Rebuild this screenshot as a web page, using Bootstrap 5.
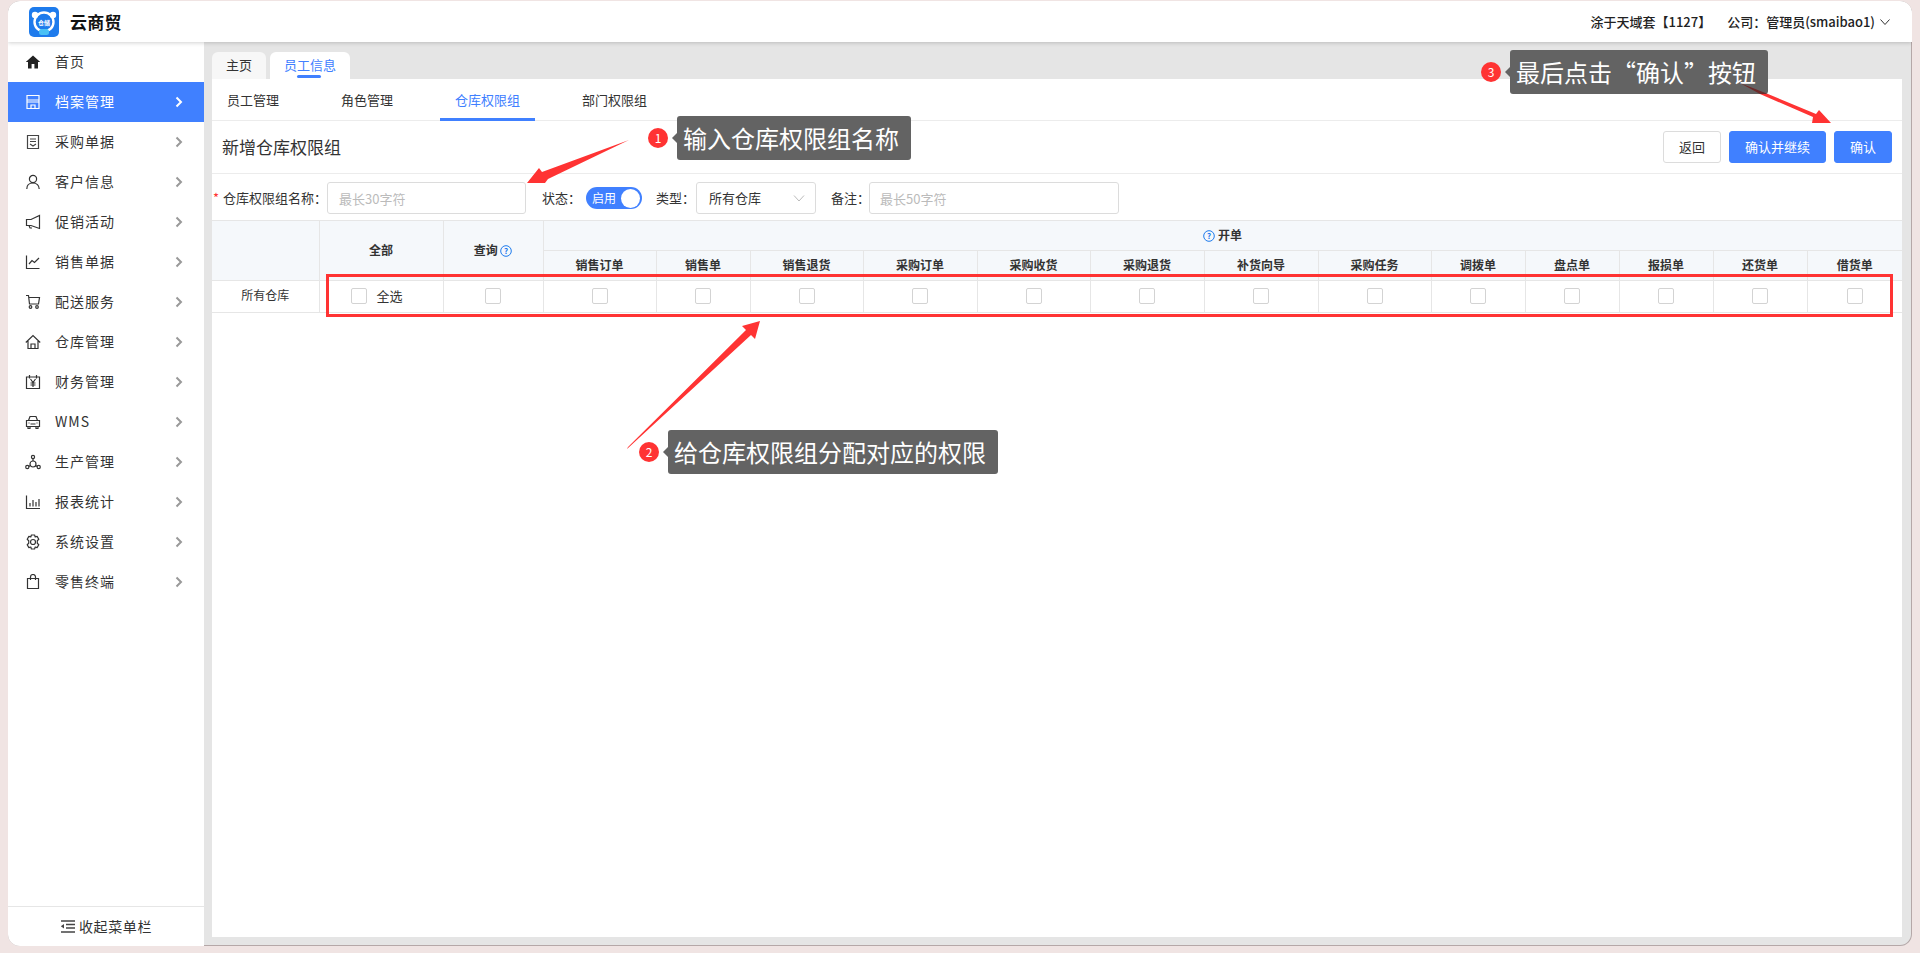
<!DOCTYPE html>
<html lang="zh-CN">
<head>
<meta charset="utf-8">
<title>云商贸</title>
<link href="https://cdn.jsdelivr.net/npm/bootstrap@5.3.0/dist/css/bootstrap.min.css" rel="stylesheet">
<style>
html,body{height:100%;margin:0}
body{background:#f0e4e3;font-family:"Noto Sans CJK SC","Liberation Sans",sans-serif;font-size:13px;color:#333;overflow:hidden}
.app-window{position:relative;margin:1px 8px 0;height:945px;width:1904px;background:#e5e5e5;border-radius:12px;overflow:hidden;box-shadow:inset 0 0 0 1px #b5a8a8}
.app-head{height:41px;background:#fff;box-shadow:0 1px 4px rgba(0,0,0,.18);position:relative;z-index:2;padding:0 21px}
.brand-logo{width:30px;height:30px;flex:none}
.brand-name{font-size:17px;font-weight:700;color:#111;margin-left:11px;letter-spacing:.3px}
.head-user{font-size:13px;font-weight:500;color:#222}
.app-body{height:904px}
.side{width:196px;background:#fff;flex:none}
.side-item{height:40px;padding:0 21px 2px 17px;color:#333;font-size:14px;letter-spacing:1px;text-decoration:none}
.side-item.on{background:#4080ff;color:#fff}
.side-item svg.ic{width:16px;height:16px;margin:2px 14px 0 0;flex:none}
.side-item .chev{width:8px;height:12px;margin:2px 0 0 auto;color:#999}
.side-item.on .chev{color:#fff}
.side-foot{height:40px;border-top:1px solid #e6e6e6;font-size:14px;letter-spacing:.6px}
.side-foot svg{width:15px;height:13px;margin-right:4px}
.work{padding:10px 10px 9px 8px}
.tab-strip{height:27px;gap:4px}
.tab-pill{background:#f7f7f7;border-radius:6px 6px 0 0;font-size:13px;color:#333;padding:0 14px;line-height:26px;height:27px;position:relative}
.tab-pill.on{background:#fff;color:#4080ff;padding:0 14px}
.tab-pill.on::after{content:"";position:absolute;left:27px;width:24px;height:3px;bottom:1px;background:#4080ff;border-radius:2px}
.panel{background:#fff;height:858px}
.sub-nav{height:42px;border-bottom:1px solid #ececec;padding-left:15px}
.sub-link{font-size:13px;color:#333;line-height:41px;position:relative;margin-right:62px}
.sub-link.on{color:#4080ff}
.sub-link.on::after{content:"";position:absolute;left:-15px;right:-15px;bottom:-1px;height:3px;background:#4080ff}
.title-bar{height:53px;border-bottom:1px solid #ececec;padding:0 10px 0 10px}
.title-txt{font-size:17px;color:#333}
.act-btn{height:32px;font-size:13px;border-radius:3px;padding:0;width:58px}
.act-btn.wide{width:97px}
.act-blue{background:#4080ff;border:1px solid #4080ff;color:#fff}
.act-plain{background:#fff;border:1px solid #dcdcdc;color:#333}
.form-bar{height:46px;padding:2px 0 0 1px;font-size:13px;color:#333}
.req{color:#f33;width:10px;display:inline-block}
.fld{height:32px;border:1px solid #dcdcdc;border-radius:3px;font-size:13px;padding:0 10px;color:#333;background:#fff}
.fld::placeholder{color:#bbb}
.fld-a{width:199px;margin:0 16px 0 0;padding-left:11px}
.fld-b{width:120px;padding-left:12px;margin:0 15px 0 1px}
.fld-c{width:250px;margin-left:-1px}
.form-lbl{white-space:nowrap}
.tgl{width:56px;height:22px;border-radius:11px;background:#4080ff;color:#fff;font-size:12px;margin:0 14px 0 5px;padding:0 2px 0 6px}
.tgl i{width:19px;height:19px;background:#fff;border-radius:50%;display:block}
.perm-tbl{table-layout:fixed;width:1690px;border-collapse:collapse;font-size:12px;margin:0;border-top:1px solid #e6e6e6}
.perm-tbl th,.perm-tbl td{border:1px solid #e6e6e6;text-align:center;vertical-align:middle;padding:0;line-height:1.2}
.perm-tbl tr>*:first-child{border-left:0}
.perm-tbl tr>*:last-child{border-right:0}
.perm-tbl th{background:#f5f8fb;font-weight:700;color:#333;height:30px}
.perm-tbl td{height:32px;background:#fff;padding-bottom:2px}
.perm-tbl td.all-cell{padding-right:8px}
.box{display:inline-block;width:16px;height:16px;border:1px solid #d3d3d3;border-radius:2px;vertical-align:middle;background:#fff}
.q-ic{width:12px;height:12px;vertical-align:-2px}
.all-lbl{margin-left:9px;font-size:13px;vertical-align:middle}
.red-frame{position:absolute;left:318px;top:273px;width:1567px;height:43px;border:3px solid #f33;pointer-events:none}
.note{position:absolute;background:#636363;color:#fff;font-size:24px;height:44px;line-height:44px;border-radius:3px;white-space:nowrap;padding:0 12px 0 6px}
.note::before{content:"";position:absolute;left:-5px;top:17px;border:5px solid transparent;border-left:0;border-right-color:#636363}
.pin{position:absolute;width:20px;height:20px;border-radius:50%;background:#f33;color:#fff;font-size:12px;line-height:20px;text-align:center}
.arrows{position:absolute;left:0;top:0;width:1904px;height:945px;pointer-events:none}
</style>
</head>
<body>
<div class="app-window">
  <header class="app-head d-flex align-items-center">
    <svg class="brand-logo" viewBox="0 0 30 30">
      <rect width="30" height="30" rx="5" fill="#1e7bec"/>
      <circle cx="15" cy="15" r="9.500" fill="none" stroke="#fff" stroke-width="2.400"/>
      <circle cx="6" cy="8" r="3.200" fill="#fff"/><circle cx="24" cy="8" r="3.200" fill="#fff"/>
      <rect x="10" y="22" width="10" height="6" rx="2.500" fill="#49c0f5"/>
      <text x="15" y="18" text-anchor="middle" font-size="6" font-weight="700" fill="#fff" font-family="Noto Sans CJK SC">仓储</text>
    </svg>
    <span class="brand-name">云商贸</span>
    <div class="ms-auto d-flex align-items-center head-user">
      <span>涂于天域套【1127】</span>
      <span class="ms-3">公司：管理员(smaibao1)</span>
      <svg class="ms-1" width="12" height="12" viewBox="0 0 12 12"><path d="M1.500 3.500 6 8.500l4.500-5" fill="none" stroke="#333" stroke-width="1"/></svg>
    </div>
  </header>
  <div class="app-body d-flex">
    <aside class="side d-flex flex-column">
      <div class="flex-grow-1">
        <a class="side-item d-flex align-items-center"><svg class="ic" viewBox="0 0 16 16"><path d="M8 1.500 0.800 8h2.200v6.500h3.600V10h2.800v4.500H13V8h2.200z" fill="#222"/></svg>首页</a>
        <a class="side-item on d-flex align-items-center"><svg class="ic" viewBox="0 0 16 16" fill="none" stroke="#fff" stroke-width="1.200"><path d="M2 1.500h12v13H2zM2 6h12M2 8h12M6 14.500v-3.500h4v3.500"/></svg>档案管理<svg class="chev" viewBox="0 0 8 12"><path d="M1.500 1.500 6 6l-4.500 4.500" fill="none" stroke="currentColor" stroke-width="2"/></svg></a>
        <a class="side-item d-flex align-items-center"><svg class="ic" viewBox="0 0 16 16" fill="none" stroke="#444" stroke-width="1.200"><path d="M2.500 1.500h11v13h-11zM5 5h6M5 7.500h6M5 10l3 2 3-2"/></svg>采购单据<svg class="chev" viewBox="0 0 8 12"><path d="M1.500 1.500 6 6l-4.500 4.500" fill="none" stroke="currentColor" stroke-width="2"/></svg></a>
        <a class="side-item d-flex align-items-center"><svg class="ic" viewBox="0 0 16 16" fill="none" stroke="#333" stroke-width="1.200"><circle cx="8" cy="5" r="3.600"/><path d="M1.800 15c0-3.800 2.600-6 6.200-6s6.200 2.200 6.200 6"/></svg>客户信息<svg class="chev" viewBox="0 0 8 12"><path d="M1.500 1.500 6 6l-4.500 4.500" fill="none" stroke="currentColor" stroke-width="2"/></svg></a>
        <a class="side-item d-flex align-items-center"><svg class="ic" viewBox="0 0 16 16" fill="none" stroke="#333" stroke-width="1.200"><path d="M14.500 1.500v13L6 11.500H1.500v-6H6zM4 11.500l1 2.500h2"/></svg>促销活动<svg class="chev" viewBox="0 0 8 12"><path d="M1.500 1.500 6 6l-4.500 4.500" fill="none" stroke="currentColor" stroke-width="2"/></svg></a>
        <a class="side-item d-flex align-items-center"><svg class="ic" viewBox="0 0 16 16" fill="none" stroke="#333" stroke-width="1.200"><path d="M1.500 1.500v13h13M4 10l3-3.500 2.500 2L14 4"/></svg>销售单据<svg class="chev" viewBox="0 0 8 12"><path d="M1.500 1.500 6 6l-4.500 4.500" fill="none" stroke="currentColor" stroke-width="2"/></svg></a>
        <a class="side-item d-flex align-items-center"><svg class="ic" viewBox="0 0 16 16" fill="none" stroke="#333" stroke-width="1.200"><path d="M1 1.500h2.500l1 8.500h9l1-6.500H4"/><circle cx="5.500" cy="13" r="1.300"/><circle cx="12" cy="13" r="1.300"/></svg>配送服务<svg class="chev" viewBox="0 0 8 12"><path d="M1.500 1.500 6 6l-4.500 4.500" fill="none" stroke="currentColor" stroke-width="2"/></svg></a>
        <a class="side-item d-flex align-items-center"><svg class="ic" viewBox="0 0 16 16" fill="none" stroke="#333" stroke-width="1.200"><path d="M.8 8.500 8 1.500l7.200 7M3 7v7.500h10V7M6 14.500V10h4v4.500"/></svg>仓库管理<svg class="chev" viewBox="0 0 8 12"><path d="M1.500 1.500 6 6l-4.500 4.500" fill="none" stroke="currentColor" stroke-width="2"/></svg></a>
        <a class="side-item d-flex align-items-center"><svg class="ic" viewBox="0 0 16 16" fill="none" stroke="#333" stroke-width="1.200"><path d="M1.500 3h13v11.500h-13zM4.500 1v3.500M11.500 1v3.500M5.500 5 8 8.500 10.500 5M5.500 9h5M5.500 11h5M8 8.500V13"/></svg>财务管理<svg class="chev" viewBox="0 0 8 12"><path d="M1.500 1.500 6 6l-4.500 4.500" fill="none" stroke="currentColor" stroke-width="2"/></svg></a>
        <a class="side-item d-flex align-items-center"><svg class="ic" viewBox="0 0 16 16" fill="none" stroke="#333" stroke-width="1.200"><path d="M3.500 6.500 5 2.500h6l1.500 4M1.500 6.500h13v6h-13zM3 12.500v2h2v-2M11 12.500v2h2v-2M5.500 10h5M3.500 9h1M11.500 9h1"/></svg>WMS<svg class="chev" viewBox="0 0 8 12"><path d="M1.500 1.500 6 6l-4.500 4.500" fill="none" stroke="currentColor" stroke-width="2"/></svg></a>
        <a class="side-item d-flex align-items-center"><svg class="ic" viewBox="0 0 16 16" fill="none" stroke="#333" stroke-width="1.200"><circle cx="8" cy="3" r="1.600"/><circle cx="2.300" cy="13" r="1.600"/><circle cx="13.700" cy="13" r="1.600"/><circle cx="8" cy="10" r="3"/><path d="M8 4.600V7M3.800 12.400l1.800-.9M12.200 12.400l-1.800-.9"/></svg>生产管理<svg class="chev" viewBox="0 0 8 12"><path d="M1.500 1.500 6 6l-4.500 4.500" fill="none" stroke="currentColor" stroke-width="2"/></svg></a>
        <a class="side-item d-flex align-items-center"><svg class="ic" viewBox="0 0 16 16" fill="none" stroke="#333" stroke-width="1.200"><path d="M1.500 1.500v13H15M5 12.500V9M8 12.500V6M11 12.500V8M14 12.500V5"/></svg>报表统计<svg class="chev" viewBox="0 0 8 12"><path d="M1.500 1.500 6 6l-4.500 4.500" fill="none" stroke="currentColor" stroke-width="2"/></svg></a>
        <a class="side-item d-flex align-items-center"><svg class="ic" viewBox="0 0 16 16" fill="none" stroke="#333" stroke-width="1.200" stroke-linejoin="round"><circle cx="8" cy="8" r="2.500"/><path d="M6.400 1h3.200l.6 2 1.900-.6 1.700 2.900-1.500 1.400v2.600l1.500 1.400-1.700 2.900-1.900-.6-.6 2H6.400l-.6-2-1.900.6-1.700-2.900 1.500-1.400V6.700L2.200 5.300l1.700-2.900 1.900.6z"/></svg>系统设置<svg class="chev" viewBox="0 0 8 12"><path d="M1.500 1.500 6 6l-4.500 4.500" fill="none" stroke="currentColor" stroke-width="2"/></svg></a>
        <a class="side-item d-flex align-items-center"><svg class="ic" viewBox="0 0 16 16" fill="none" stroke="#333" stroke-width="1.200"><path d="M2.500 4.500h11v10h-11zM5.500 6V3a2.500 2.500 0 0 1 5 0v3"/></svg>零售终端<svg class="chev" viewBox="0 0 8 12"><path d="M1.500 1.500 6 6l-4.500 4.500" fill="none" stroke="currentColor" stroke-width="2"/></svg></a>
      </div>
      <div class="side-foot d-flex align-items-center justify-content-center">
        <svg viewBox="0 0 15 13" fill="none" stroke="#444" stroke-width="1.400"><path d="M1 1h14M6 4.500h9M6 8h9M1 12h14"/><path d="M4 4v4.500L.8 6.300z" fill="#444" stroke="none"/></svg>收起菜单栏
      </div>
    </aside>
    <main class="work flex-grow-1">
      <div class="tab-strip d-flex">
        <span class="tab-pill">主页</span>
        <span class="tab-pill on">员工信息</span>
      </div>
      <section class="panel">
        <nav class="sub-nav d-flex">
          <span class="sub-link">员工管理</span>
          <span class="sub-link">角色管理</span>
          <span class="sub-link on">仓库权限组</span>
          <span class="sub-link">部门权限组</span>
        </nav>
        <div class="title-bar d-flex align-items-center">
          <span class="title-txt">新增仓库权限组</span>
          <div class="ms-auto d-flex gap-2">
            <button class="btn act-btn act-plain">返回</button>
            <button class="btn act-btn wide act-blue">确认并继续</button>
            <button class="btn act-btn act-blue">确认</button>
          </div>
        </div>
        <div class="form-bar d-flex align-items-center">
          <span class="form-lbl"><span class="req">*</span>仓库权限组名称：</span>
          <input class="fld fld-a" placeholder="最长30字符">
          <span class="form-lbl">状态：</span>
          <span class="tgl d-flex align-items-center justify-content-between">启用<i></i></span>
          <span class="form-lbl">类型：</span>
          <span class="fld fld-b d-flex align-items-center justify-content-between">所有仓库<svg width="12" height="12" viewBox="0 0 12 12"><path d="M1 3.500 6 9l5-5.500" fill="none" stroke="#bbb"/></svg></span>
          <span class="form-lbl">备注：</span>
          <input class="fld fld-c" placeholder="最长50字符">
        </div>
        <table class="perm-tbl">
          <colgroup><col style="width:107px"><col style="width:124px"><col style="width:100px"><col style="width:113px"><col style="width:94px"><col style="width:113px"><col style="width:114px"><col style="width:113px"><col style="width:114px"><col style="width:114px"><col style="width:113px"><col style="width:94px"><col style="width:94px"><col style="width:94px"><col style="width:94px"><col style="width:95px"></colgroup>
          <thead>
            <tr><th rowspan="2"></th><th rowspan="2">全部</th><th rowspan="2">查询 <svg class="q-ic" viewBox="0 0 12 12"><circle cx="6" cy="6" r="5.300" fill="none" stroke="#1e7bec"/><text x="6" y="9" font-size="8" text-anchor="middle" fill="#1e7bec">?</text></svg></th><th colspan="13"><svg class="q-ic" viewBox="0 0 12 12"><circle cx="6" cy="6" r="5.300" fill="none" stroke="#1e7bec"/><text x="6" y="9" font-size="8" text-anchor="middle" fill="#1e7bec">?</text></svg> 开单</th></tr>
            <tr><th>销售订单</th><th>销售单</th><th>销售退货</th><th>采购订单</th><th>采购收货</th><th>采购退货</th><th>补货向导</th><th>采购任务</th><th>调拨单</th><th>盘点单</th><th>报损单</th><th>还货单</th><th>借货单</th></tr>
          </thead>
          <tbody>
            <tr><td>所有仓库</td><td class="all-cell"><span class="box"></span><span class="all-lbl">全选</span></td><td><span class="box"></span></td><td><span class="box"></span></td><td><span class="box"></span></td><td><span class="box"></span></td><td><span class="box"></span></td><td><span class="box"></span></td><td><span class="box"></span></td><td><span class="box"></span></td><td><span class="box"></span></td><td><span class="box"></span></td><td><span class="box"></span></td><td><span class="box"></span></td><td><span class="box"></span></td><td><span class="box"></span></td></tr>
          </tbody>
        </table>
      </section>
    </main>
  </div>
  <div class="red-frame"></div>
  <svg class="arrows" viewBox="0 0 1904 945">
    <g fill="#f33">
      <polygon points="621,139 540,178 537,182 519,182 531,167 534,171"/>
      <polygon points="619,448 620,446 738,329 734,325 752,320 747,338 743,334"/>
    </g>
  </svg>
  <span class="pin" style="left:640px;top:127px">1</span>
  <div class="note" style="left:669px;top:115px">输入仓库权限组名称</div>
  <span class="pin" style="left:631px;top:441px">2</span>
  <div class="note" style="left:660px;top:429px">给仓库权限组分配对应的权限</div>
  <span class="pin" style="left:1473px;top:61px">3</span>
  <div class="note" style="left:1502px;top:49px">最后点击“确认”按钮</div>
  <svg class="arrows" viewBox="0 0 1904 945">
    <polygon points="1732,82 1760,93 1752,93" fill="#6e2a2a"/>
    <polygon points="1752,93 1760,93 1808,113 1811,109 1823,122 1804,122 1805,116" fill="#f33"/>
  </svg>
</div>
<script src="https://cdn.jsdelivr.net/npm/bootstrap@5.3.0/dist/js/bootstrap.bundle.min.js"></script>
</body>
</html>
